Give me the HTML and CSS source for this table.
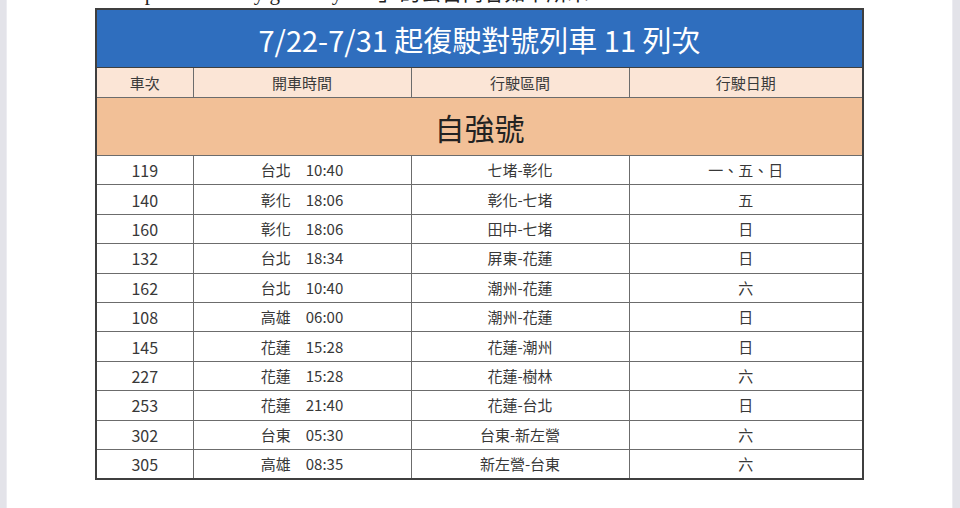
FILE: index.html
```html
<!DOCTYPE html>
<html lang="zh-Hant">
<head>
<meta charset="utf-8">
<title>7/22-7/31 起復駛對號列車</title>
<link rel="stylesheet" href="styles.css">
</head>
<body>
<div class="frame">
  <div class="edge edge-left"></div>
  <main class="page">
    <div class="cutline"><span class="cuttext">ample of the way given by the 」的公告內容如下所示</span></div>
    <table class="timetable">
      <colgroup>
        <col class="c1"><col class="c2"><col class="c3"><col class="c4">
      </colgroup>
      <tr class="title-row"><th colspan="4">7/22-7/31 起復駛對號列車 11 列次</th></tr>
      <tr class="head-row"><th>車次</th><th>開車時間</th><th>行駛區間</th><th>行駛日期</th></tr>
      <tr class="section-row"><th colspan="4">自強號</th></tr>
      <tr><td>119</td><td>台北　10:40</td><td>七堵-彰化</td><td>一、五、日</td></tr>
      <tr><td>140</td><td>彰化　18:06</td><td>彰化-七堵</td><td>五</td></tr>
      <tr><td>160</td><td>彰化　18:06</td><td>田中-七堵</td><td>日</td></tr>
      <tr><td>132</td><td>台北　18:34</td><td>屏東-花蓮</td><td>日</td></tr>
      <tr><td>162</td><td>台北　10:40</td><td>潮州-花蓮</td><td>六</td></tr>
      <tr><td>108</td><td>高雄　06:00</td><td>潮州-花蓮</td><td>日</td></tr>
      <tr><td>145</td><td>花蓮　15:28</td><td>花蓮-潮州</td><td>日</td></tr>
      <tr><td>227</td><td>花蓮　15:28</td><td>花蓮-樹林</td><td>六</td></tr>
      <tr><td>253</td><td>花蓮　21:40</td><td>花蓮-台北</td><td>日</td></tr>
      <tr><td>302</td><td>台東　05:30</td><td>台東-新左營</td><td>六</td></tr>
      <tr><td>305</td><td>高雄　08:35</td><td>新左營-台東</td><td>六</td></tr>
    </table>
  </main>
  <div class="edge edge-right"></div>
</div>
</body>
</html>
```
FILE: styles.css
```css
html, body {
  margin: 0;
  padding: 0;
  background: #ffffff;
}
.frame {
  display: flex;
  width: 960px;
  height: 508px;
  overflow: hidden;
}
.edge {
  flex: 0 0 auto;
  height: 100%;
  background: #e3e3e9;
}
.edge-left {
  width: 6px;
  border-right: 1px solid #ececf1;
}
.edge-right {
  width: 7px;
  border-left: 1px solid #ececf1;
}
.page {
  flex: 1 1 auto;
  display: flex;
  flex-direction: column;
  align-items: center;
}
.cutline {
  width: 100%;
  height: 8px;
  overflow: hidden;
}
.cuttext {
  display: block;
  margin-top: -19px;
  padding-left: 112px;
  font-family: "Liberation Serif", "Noto Sans CJK TC", serif;
  font-size: 21px;
  line-height: 24px;
  color: #222;
  white-space: nowrap;
}
.timetable {
  width: 767px;
  border-collapse: collapse;
  table-layout: fixed;
  border: 2px solid #3f3f3f;
  font-family: "Noto Sans CJK TC", "Noto Sans", sans-serif;
  color: #333;
}
.c1 { width: 97px; }
.c2 { width: 218px; }
.c3 { width: 218px; }
.c4 { width: 234px; }
.timetable th,
.timetable td {
  border: 1px solid #6c6c6c;
  padding: 0;
  text-align: center;
  font-weight: 400;
}
.title-row th {
  height: 57px;
  background: #2f6ebe;
  color: #ffffff;
  font-size: 29px;
  line-height: 30px;
  border-color: #3f3f3f;
}
.head-row th {
  height: 29px;
  background: #fbe5d6;
  font-size: 15px;
  color: #3a3a3a;
}
.section-row th {
  height: 57px;
  background: #f2c097;
  font-size: 30px;
  color: #222;
}
.timetable td {
  height: 28.4px;
  font-size: 15px;
  line-height: 18px;
  color: #383838;
}
.timetable td:first-child {
  font-size: 16px;
}
```
